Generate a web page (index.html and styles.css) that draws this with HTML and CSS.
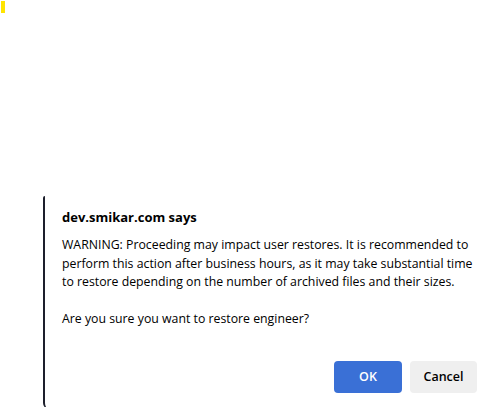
FILE: index.html
```html
<!DOCTYPE html>
<html>
<head>
<meta charset="utf-8">
<link rel="stylesheet" href="styles.css">
</head>
<body>
<div class="page">
  <div class="marker"></div>
  <div class="dialog">
    <div class="title">dev.smikar.com says</div>
    <div class="message">WARNING: Proceeding may impact user restores. It is recommended to
perform this action after business hours, as it may take substantial time
to restore depending on the number of archived files and their sizes.

Are you sure you want to restore engineer?</div>
    <div class="actions">
      <button class="btn btn-ok">OK</button>
      <button class="btn btn-cancel">Cancel</button>
    </div>
  </div>
</div>
</body>
</html>
```

FILE: styles.css
```css
html, body {
  margin: 0;
  padding: 0;
  background: #ffffff;
  overflow: hidden;
}

.page {
  width: 490px;
  height: 407px;
  display: flex;
  flex-direction: column;
  font-family: "Open Sans", "Noto Sans", sans-serif;
  color: #000000;
  overflow: hidden;
}

.marker {
  width: 4px;
  height: 12px;
  margin: 1px 0 0 1px;
  background: #ffe400;
  flex: none;
}

.dialog {
  margin: 183px 0 0 43px;
  height: 213px;
  width: 447px;
  border-left: 2px solid #1d1f2c;
  border-top-left-radius: 2px;
  border-bottom-left-radius: 6px;
  padding: 12px 0 0 17px;
  box-sizing: border-box;
  display: flex;
  flex-direction: column;
  flex: none;
}

.title {
  font-size: 13px;
  font-weight: 700;
  line-height: 18px;
}

.message {
  margin-top: 10px;
  font-size: 12.3px;
  line-height: 18.5px;
  white-space: pre;
}

.actions {
  margin-top: 32px;
  width: 415px;
  display: flex;
  justify-content: flex-end;
  gap: 8px;
}

.btn {
  height: 32px;
  border: none;
  border-radius: 4px;
  font-family: "Open Sans", "Noto Sans", sans-serif;
  font-size: 12.5px;
  font-weight: 600;
  padding: 0;
  cursor: pointer;
}

.btn-ok {
  width: 68px;
  background: #3a70d6;
  color: #ffffff;
}

.btn-cancel {
  width: 67px;
  background: #efefef;
  color: #000000;
}
```
